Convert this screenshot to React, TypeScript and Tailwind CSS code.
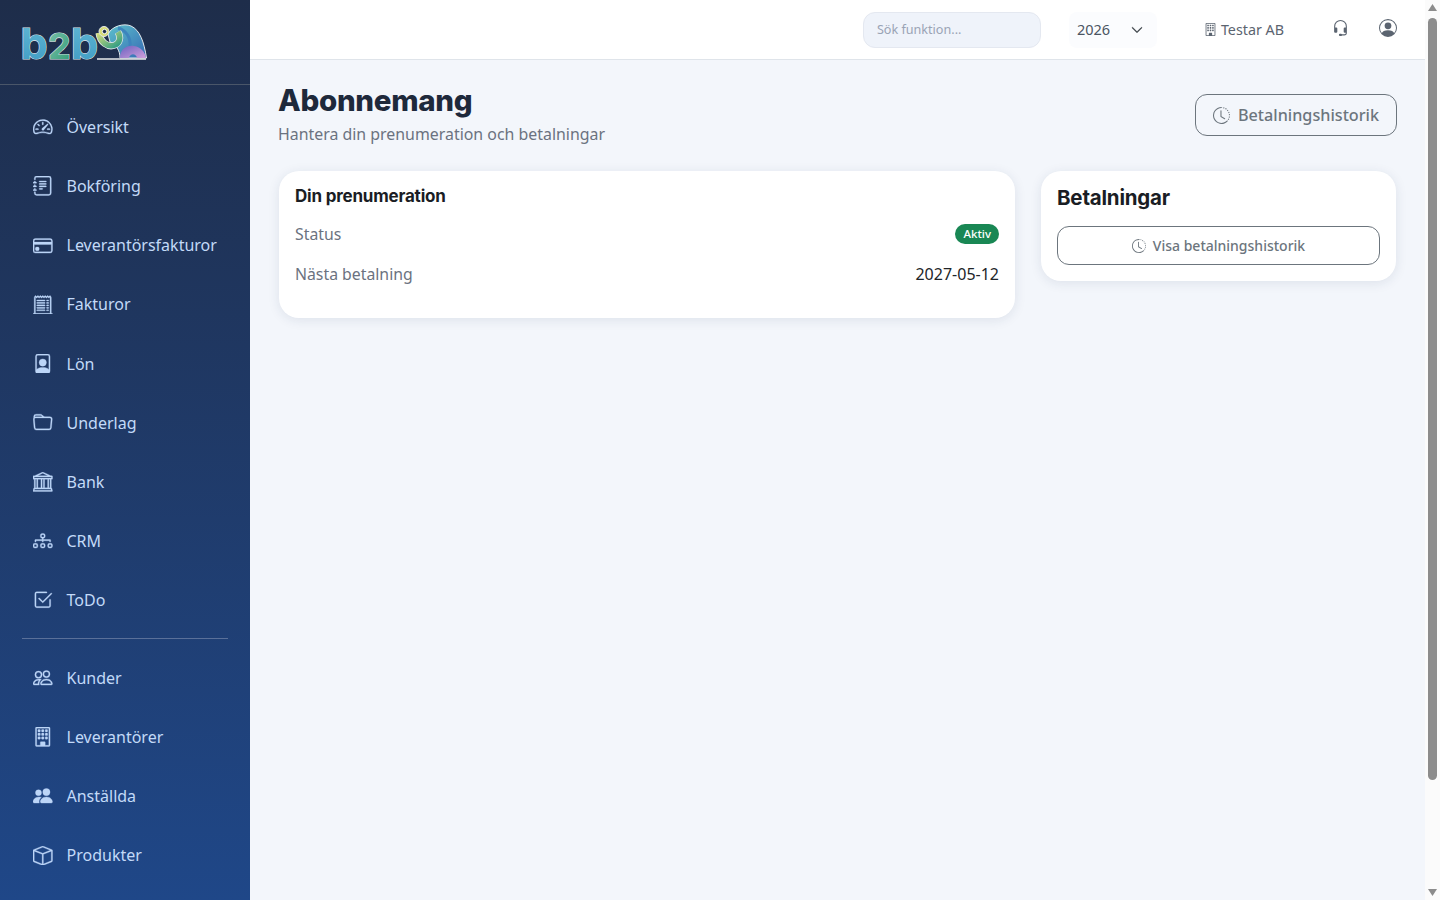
import {
  BsBank,
  BsBox,
  BsBuilding,
  BsCheck2Square,
  BsChevronDown,
  BsClockHistory,
  BsCreditCard,
  BsDiagram3,
  BsFilePerson,
  BsFolder,
  BsHeadset,
  BsJournalText,
  BsPeople,
  BsPeopleFill,
  BsPersonCircle,
  BsReceiptCutoff,
  BsSpeedometer2,
} from "react-icons/bs";
import type { IconType } from "react-icons";

const body = "font-['Noto_Sans',sans-serif]";
const heading = "font-['Inter',sans-serif]";

const mainNav: [string, IconType][] = [
  ["Översikt", BsSpeedometer2],
  ["Bokföring", BsJournalText],
  ["Leverantörsfakturor", BsCreditCard],
  ["Fakturor", BsReceiptCutoff],
  ["Lön", BsFilePerson],
  ["Underlag", BsFolder],
  ["Bank", BsBank],
  ["CRM", BsDiagram3],
  ["ToDo", BsCheck2Square],
];

const registerNav: [string, IconType][] = [
  ["Kunder", BsPeople],
  ["Leverantörer", BsBuilding],
  ["Anställda", BsPeopleFill],
  ["Produkter", BsBox],
];

function Logo() {
  return (
    <svg viewBox="20 14 130 60" className="h-[60px] w-[130px]">
      <defs>
        <linearGradient id="letterBlue" x1="0" y1="0" x2="0" y2="1">
          <stop offset="0" stopColor="#62b8d4" />
          <stop offset="1" stopColor="#3f9bc4" />
        </linearGradient>
        <linearGradient id="letterGreen" x1="0" y1="0" x2="1" y2="1">
          <stop offset="0" stopColor="#7fc4b0" />
          <stop offset="1" stopColor="#2f9a72" />
        </linearGradient>
        <linearGradient id="trunk" x1="0" y1="0" x2="1" y2="1">
          <stop offset="0" stopColor="#d8dc78" />
          <stop offset="1" stopColor="#2d9c84" />
        </linearGradient>
        <linearGradient id="elephant" x1="0" y1="0" x2="1" y2="1">
          <stop offset="0" stopColor="#5cc0cc" />
          <stop offset="1" stopColor="#3569b4" />
        </linearGradient>
        <linearGradient id="legs" x1="0" y1="0" x2="1" y2="1">
          <stop offset="0" stopColor="#6c62c0" />
          <stop offset="1" stopColor="#d0a0dc" />
        </linearGradient>
      </defs>
      <g fontFamily="Inter, sans-serif" fontWeight="700" fontSize="43" stroke="#dfe6ea" strokeWidth="1.2" paintOrder="stroke">
        <text x="20.500" y="61" fill="url(#letterBlue)">b</text>
        <text x="48" y="61" fill="url(#letterGreen)" fontSize="36">2</text>
        <text x="71" y="61" fill="url(#letterBlue)">b</text>
      </g>
      <path d="M97 61H146" stroke="#e8ecee" strokeWidth="1.600" />
      <path d="M108 36C112 28 124 25 131 28C140 32 144 44 146.500 60H120C120 52 116 47 110 44Z" fill="url(#elephant)" stroke="#e4e8ec" strokeWidth="1" />
      <path d="M118 30C126 32 131 40 130 48" fill="none" stroke="#3d84bd" strokeWidth="3" />
      <path d="M120 60C120 51 127 47 134 48C141 49 145 54 146 60H137C136 55 130 55 129 60Z" fill="url(#legs)" />
      <path d="M99 35C100 44 108 50 115 47C120 45 121 39 118 34" fill="none" stroke="#e4e8ec" strokeWidth="7" />
      <path d="M99 35C100 44 108 50 115 47C120 45 121 39 118 34" fill="none" stroke="url(#trunk)" strokeWidth="5.500" />
      <circle cx="104" cy="33.500" r="5" fill="#d8dc78" stroke="#e4e8ec" />
      <circle cx="104.500" cy="33.500" r="2.200" fill="#1e2d4a" stroke="#f2f4f4" />
    </svg>
  );
}

function NavItem({ label, icon: Icon }: { label: string; icon: IconType }) {
  return (
    <a className="flex h-[59.125px] items-center pl-[33px] text-[16px] text-[#c3daf8]">
      <Icon className="size-[19.500px] shrink-0 stroke-[0.25] text-[#bcd5f7]" />
      <span className="ml-[14px]">{label}</span>
    </a>
  );
}

function Sidebar() {
  return (
    <aside className="w-[250px] shrink-0 overflow-hidden bg-gradient-to-b from-[#1e2d4a] to-[#1f4788]">
      <div className="flex h-[85px] items-center border-b border-[#4a5669] pl-[20px]">
        <Logo />
      </div>
      <nav className="pt-[12.500px]">
        {mainNav.map(([label, icon]) => (
          <NavItem key={label} label={label} icon={icon} />
        ))}
        <hr className="mx-[22px] mt-[8.500px] mb-[9.300px] border-[#5a7099]" />
        {registerNav.map(([label, icon]) => (
          <NavItem key={label} label={label} icon={icon} />
        ))}
      </nav>
    </aside>
  );
}

function Topbar() {
  return (
    <header className="flex h-[60px] items-center border-b border-[#dfe4ea] bg-white pr-[28px]">
      <div className="ml-auto flex h-9 w-[178px] items-center rounded-xl border border-[#e4e8f0] bg-[#eff3fa] pt-[2px] pl-[13px] text-[12.600px] text-[#9aa3b5]">
        Sök funktion...
      </div>
      <div className="ml-[28px] flex h-9 w-[88px] items-center rounded-lg bg-[#fbfcfe] pl-2 text-[14.500px] text-[#4b5563]">
        2026
        <BsChevronDown className="ml-[21px] size-3 stroke-[0.8] text-[#343a40]" />
      </div>
      <div className="ml-[47px] flex items-center text-[14.300px] text-[#5b6470]">
        <BsBuilding className="size-[13px]" />
        <span className="ml-[4px]">Testar AB</span>
      </div>
      <BsHeadset className="ml-[48px] mb-[3px] size-[17px] text-[#5b6470]" />
      <BsPersonCircle className="ml-[30px] mb-[3px] size-[18px] text-[#5b6470]" />
    </header>
  );
}

function SubscriptionCard() {
  return (
    <section className="rounded-[20px] bg-white px-4 pt-[15px] pb-[24px] shadow-[0_2px_12px_rgba(30,45,90,0.1)]">
      <h3 className={`${heading} text-[17px] leading-5 font-bold tracking-[-0.2px] text-[#1a1d24]`}>Din prenumeration</h3>
      <div className="mt-[8px] flex h-10 items-center justify-between text-[15.800px] text-[#6b7280]">
        <span className="pt-[2px]">Status</span>
        <span className="rounded-full bg-[#198754] px-2 py-[2px] text-[11.500px] leading-4 font-medium text-white">Aktiv</span>
      </div>
      <div className="flex h-10 items-center justify-between text-[15.800px] text-[#6b7280]">
        <span className="pt-[2px]">Nästa betalning</span>
        <span className="text-[16px] text-[#212529]">2027-05-12</span>
      </div>
    </section>
  );
}

function PaymentsCard() {
  return (
    <section className="self-start rounded-[20px] bg-white px-4 pt-[15px] pb-[16px] shadow-[0_2px_12px_rgba(30,45,90,0.1)]">
      <h3 className={`${heading} text-[20.500px] leading-6 font-bold tracking-[-0.2px] text-[#1a1d24]`}>Betalningar</h3>
      <button className="mt-[16px] flex h-[39px] w-full items-center justify-center gap-[7px] rounded-xl border border-[#6c757d] text-[14px] font-medium text-[#6c757d]">
        <BsClockHistory className="size-[14px]" />
        Visa betalningshistorik
      </button>
    </section>
  );
}

function Scrollbar() {
  return (
    <div className="flex w-[15px] shrink-0 flex-col items-center bg-[#fbfbfb] pt-[4px] pb-[4px]">
      <svg viewBox="0 0 9 7" className="h-[7px] w-[9px] fill-[#8c8c8c]">
        <path d="M4.500 0L9 7H0Z" />
      </svg>
      <div className="mt-[7px] h-[762px] w-[9px] rounded-full bg-[#8c8c8c]" />
      <svg viewBox="0 0 9 7" className="mt-auto h-[7px] w-[9px] fill-[#8c8c8c]">
        <path d="M0 0H9L4.500 7Z" />
      </svg>
    </div>
  );
}

export default function App() {
  return (
    <div className={`${body} flex h-screen overflow-hidden bg-[#f3f6fb]`}>
      <Sidebar />
      <div className="min-w-0 flex-1">
        <Topbar />
        <main className="px-[28px] pt-[23px]">
          <div className="flex items-start justify-between">
            <div>
              <h1 className={`${heading} text-[29.500px] leading-[34px] font-extrabold tracking-[-0.3px] text-[#1e293b]`}>Abonnemang</h1>
              <p className="mt-[5px] text-[15.900px] leading-6 text-[#6b7280]">Hantera din prenumeration och betalningar</p>
            </div>
            <button className="mt-[11px] flex h-[42px] w-[202px] items-center justify-center gap-2 rounded-xl border border-[#6c757d] text-[16.200px] font-medium text-[#6c757d]">
              <BsClockHistory className="size-[17px]" />
              Betalningshistorik
            </button>
          </div>
          <div className="mt-[25px] grid grid-cols-[736px_355px] gap-[26px] pl-px">
            <SubscriptionCard />
            <PaymentsCard />
          </div>
        </main>
      </div>
      <Scrollbar />
    </div>
  );
}
